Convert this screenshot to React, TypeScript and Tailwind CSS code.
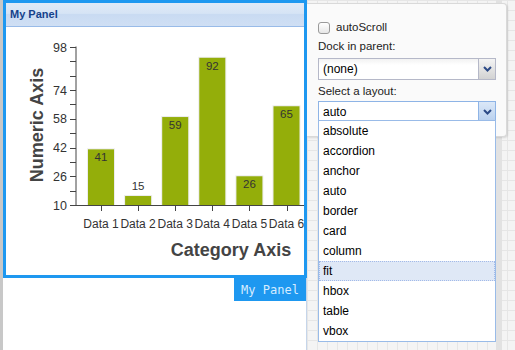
const layouts = ['absolute', 'accordion', 'anchor', 'auto', 'border', 'card', 'column', 'fit', 'hbox', 'table', 'vbox'];

const data = [
  { name: 'Data 1', value: 41 },
  { name: 'Data 2', value: 15 },
  { name: 'Data 3', value: 59 },
  { name: 'Data 4', value: 92 },
  { name: 'Data 5', value: 26 },
  { name: 'Data 6', value: 65 },
];

const yOf = (v: number) => 205 - (v - 10) * 1.795;

const Chevron = ({ color }: { color: string }) => (
  <svg width="9" height="6" viewBox="0 0 9 6">
    <path d="M1 1 L4.5 4.5 L8 1" fill="none" stroke={color} strokeWidth="2" />
  </svg>
);

const Chart = () => {
  const ticks = Array.from({ length: 12 }, (_, i) => 10 + i * 8);
  const labeled = [10, 26, 42, 58, 74, 98];

  return (
    <svg width="298" height="248" viewBox="6 27 298 248" style={{ fontFamily: '"Liberation Sans", Arial, sans-serif' }}>
      <line x1="76" y1="46.5" x2="76" y2="205.5" stroke="#444" strokeWidth="1" />
      <line x1="76" y1="205.5" x2="305" y2="205.5" stroke="#444" strokeWidth="1" />
      {ticks.map(t => (
        <line key={t} x1="70" x2="76" y1={Math.round(yOf(t)) + 0.5} y2={Math.round(yOf(t)) + 0.5} stroke="#444" />
      ))}
      {labeled.map(t => (
        <text key={t} x="67" y={yOf(t) + 4.5} textAnchor="end" fontSize="12.5" fill="#333">
          {t}
        </text>
      ))}
      {data.map((d, i) => {
        const cx = 101 + i * 37.1;
        const top = yOf(d.value);
        const inside = d.value > 20;
        return (
          <g key={d.name}>
            <rect x={cx - 14} y={top - 1} width="28" height={205 - top + 1} fill="#ececec" />
            <rect x={cx - 13} y={top} width="26" height={205 - top} fill="#94ae0a" />
            <text x={cx} y={inside ? top + 12 : top - 6} textAnchor="middle" fontSize="11.5" fill="#333">
              {d.value}
            </text>
            <line x1={Math.round(cx) + 0.5} x2={Math.round(cx) + 0.5} y1="205" y2="211" stroke="#444" />
            <text x={cx} y="227.5" textAnchor="middle" fontSize="12" fill="#333">
              {d.name}
            </text>
          </g>
        );
      })}
      <text x="231" y="256" textAnchor="middle" fontSize="18" fontWeight="bold" fill="#444">
        Category Axis
      </text>
      <text transform="translate(43 125) rotate(-90)" textAnchor="middle" fontSize="18" fontWeight="bold" fill="#444">
        Numeric Axis
      </text>
    </svg>
  );
};

export default function App() {
  return (
    <div className="relative flex h-[350px] w-[515px] overflow-hidden bg-white font-['Liberation_Sans',Arial,sans-serif]">
      <div className="flex w-[307px] shrink-0 flex-col border-l-[3px] border-[#c8c8c8] bg-white">
        <div className="flex h-[278px] flex-col border-[3px] border-[#1e98f0]">
          <div className="flex h-[24px] items-center border-b border-[#99bbe8] bg-[linear-gradient(#dfe9f7_0%,#d6e4f5_45%,#c9dbf2_50%,#cfdff4_100%)] pl-[4px] font-['Liberation_Sans',Arial,sans-serif] text-[11px] font-bold text-[#15428b]">
            My Panel
          </div>
          <div className="flex-1 bg-white">
            <Chart />
          </div>
        </div>
        <div className="flex flex-1 flex-col border-r border-[#c5d5ea]">
          <div className="flex justify-end">
            <div className="flex h-[23px] w-[72px] items-center justify-center bg-[#1e98f0] font-['DejaVu_Sans_Mono',monospace] text-[12px] text-[#d6ecff]">
              My Panel
            </div>
          </div>
        </div>
      </div>

      <div className="relative flex-1 bg-[#f4f4f4] bg-[linear-gradient(#e6e6e6_1px,transparent_1px),linear-gradient(90deg,#e6e6e6_1px,transparent_1px)] bg-[size:10px_10px]">
        <div className="absolute left-[189px] top-0 h-full w-[6px] bg-[#e2e2e2]" />
      </div>

      <div className="absolute left-[307px] top-[3px] flex h-[134px] w-[200px] flex-col rounded-r-[4px] border border-l-0 border-[#d9d9d9] bg-[#fafafa] pl-[11px] pr-[10px] shadow-[1px_1px_2px_rgba(0,0,0,0.12)]">
        <div className="mt-[17px] flex h-[13px] items-center gap-[6px]">
          <div className="h-[12px] w-[12px] rounded-[3px] border border-[#9a9a9a] bg-[linear-gradient(#ffffff,#e6e6e6)]" />
          <span className="text-[11.5px] text-[#222]">autoScroll</span>
        </div>
        <div className="mt-[6px] h-[13px] text-[11.5px] leading-[13px] text-[#222]">Dock in parent:</div>
        <div className="mt-[5px] flex h-[22px] w-[178px] border border-[#b5b8c8] bg-[linear-gradient(#f2f2f2,#ffffff_6px)]">
          <div className="flex flex-1 items-center pl-[4px] text-[12px] text-[#000]">(none)</div>
          <div className="flex w-[17px] items-center justify-center border-l border-[#b5b8c8] bg-[linear-gradient(#f4f4f4,#d2d2d2)]">
            <Chevron color="#2c4a86" />
          </div>
        </div>
        <div className="mt-[5px] h-[13px] text-[11.5px] leading-[13px] text-[#222]">Select a layout:</div>
        <div className="mt-[3px] flex h-[22px] w-[178px] border border-[#8eb4e6] bg-white">
          <div className="flex flex-1 items-center pl-[4px] text-[12px] text-[#000]">auto</div>
          <div className="flex w-[17px] items-center justify-center border-l border-[#8eb4e6] bg-[linear-gradient(#dbe8f8,#b7cfee)]">
            <Chevron color="#2c4a86" />
          </div>
        </div>
      </div>

      <div className="absolute left-[318px] top-[120px] w-[178px] border border-[#99bbe8] bg-white py-[0px]">
        {layouts.map(l => (
          <div
            key={l}
            className={
              l === 'fit'
                ? 'flex h-[20px] items-center border border-dotted border-[#a3bae9] bg-[#dfe8f6] pl-[3px] text-[12px] text-[#000]'
                : 'flex h-[20px] items-center border border-transparent pl-[3px] text-[12px] text-[#000]'
            }
          >
            {l}
          </div>
        ))}
      </div>
    </div>
  );
}
